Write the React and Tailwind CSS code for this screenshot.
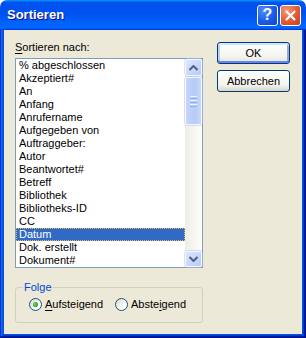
const items = [
  "% abgeschlossen",
  "Akzeptiert#",
  "An",
  "Anfang",
  "Anrufername",
  "Aufgegeben von",
  "Auftraggeber:",
  "Autor",
  "Beantwortet#",
  "Betreff",
  "Bibliothek",
  "Bibliotheks-ID",
  "CC",
  "Datum",
  "Dok. erstellt",
  "Dokument#",
];

function Chevron({ up }) {
  return (
    <svg width="9" height="6" viewBox="0 0 9 6">
      <path
        d={up ? "M0.5 5 L4.5 1 L8.5 5" : "M0.5 1 L4.5 5 L8.5 1"}
        fill="none"
        stroke="#4D6185"
        strokeWidth="2"
      />
    </svg>
  );
}

function ScrollBtn({ up, h }) {
  return (
    <div
      className={`w-[17px] ${h} shrink-0 rounded-[2px] border border-[#F4F7FE] bg-[linear-gradient(135deg,#DCE6FE,#B8CBF8)] shadow-[0_0_0_0.5px_#AFC3EE] flex items-center justify-center`}
    >
      <Chevron up={up} />
    </div>
  );
}

function Radio({ checked }) {
  return (
    <div className="w-[13px] h-[13px] shrink-0 rounded-full border border-[#1C5180] bg-[linear-gradient(135deg,#DCD8CC,#FFFFFF_75%)] flex items-center justify-center">
      {checked && (
        <div className="w-[5px] h-[5px] rounded-full bg-[radial-gradient(circle_at_40%_40%,#6BD96B,#21A121_70%)]" />
      )}
    </div>
  );
}

export default function App() {
  return (
    <div
      className="w-[306px] h-[338px] flex flex-col rounded-t-[7px] overflow-hidden text-[11px] leading-[13px] text-black"
      style={{ fontFamily: '"Liberation Sans", Arial, sans-serif' }}
    >
      {/* title bar */}
      <div className="h-[30px] shrink-0 flex items-center pl-[7px] pr-[5px] bg-[linear-gradient(180deg,#0997FF,#0053EE_8%,#0050EE_40%,#0066FF_88%,#0066FF_93%,#005BFF_95%,#003DD7_96%,#003DD7)]">
        <span className="flex-1 text-white font-bold text-[13px] leading-[16px] [text-shadow:1px_1px_#0F1089]">
          Sortieren
        </span>
        <div className="flex gap-[2px]">
          <div className="w-[21px] h-[21px] rounded-[3px] border border-white bg-[radial-gradient(circle_at_30%_25%,#4C8DF9,#1B5BEB_55%,#0C44D4)] flex items-center justify-center text-white font-bold text-[16px] leading-none">
            ?
          </div>
          <div className="w-[21px] h-[21px] rounded-[3px] border border-white bg-[radial-gradient(circle_at_30%_25%,#F2997A,#E15A33_55%,#C2401C)] flex items-center justify-center">
            <svg width="11" height="11" viewBox="0 0 11 11">
              <path d="M1 1 L10 10 M10 1 L1 10" stroke="white" strokeWidth="2.2" />
            </svg>
          </div>
        </div>
      </div>

      {/* frame + body */}
      <div className="flex-1 flex p-[4px] pt-0 bg-[#0855DD] shadow-[inset_-1px_-1px_#00138C,inset_1px_0_#0831D9,inset_-2px_-2px_#001EA0,inset_2px_0_#166AEE,inset_-3px_-3px_#003BDA,inset_3px_0_#0855DD]">
        <div className="flex-1 bg-[#ECE9D8] flex pl-[11px] pt-[11px]">
          {/* left column */}
          <div className="w-[188px] flex flex-col">
            <div className="h-[13px] mb-[4px]">
              <span className="underline underline-offset-[2px]">S</span>ortieren nach:
            </div>
            <div className="h-[210px] border border-[#7F9DB9] bg-white flex">
              <div className="flex-1 flex flex-col">
                {items.map((it) => (
                  <div
                    key={it}
                    className={
                      it === "Datum"
                        ? "h-[13px] pl-[3px] bg-[#316AC5] text-white outline outline-1 outline-dotted outline-[#E8B84A] -outline-offset-1 whitespace-nowrap"
                        : "h-[13px] pl-[3px] whitespace-nowrap"
                    }
                  >
                    {it}
                  </div>
                ))}
              </div>
              <div className="w-[17px] flex flex-col bg-[linear-gradient(90deg,#EEEDE5,#FDFDFA)]">
                <ScrollBtn up h="h-[17px]" />
                <div className="mt-[1px] w-[17px] h-[48px] rounded-[2px] border border-[#F4F7FE] bg-[linear-gradient(90deg,#C6D6FC,#B7CAF7_60%,#C9D7FB)] shadow-[0_0_0_0.5px_#AFC3EE] flex flex-col items-center justify-center gap-[1px]">
                  <div className="w-[7px] h-[1px] bg-[#EEF4FE]" />
                  <div className="w-[7px] h-[1px] bg-[#8CB0F8]" />
                  <div className="w-[7px] h-[1px] bg-[#EEF4FE]" />
                  <div className="w-[7px] h-[1px] bg-[#8CB0F8]" />
                  <div className="w-[7px] h-[1px] bg-[#EEF4FE]" />
                  <div className="w-[7px] h-[1px] bg-[#8CB0F8]" />
                </div>
                <div className="flex-1" />
                <ScrollBtn h="h-[16px]" />
              </div>
            </div>

            <fieldset className="mt-[13px] border border-[#D0D0BF] rounded-[3px] pb-[11px]">
              <legend className="ml-[7px] px-[1px] text-[#0046D5] leading-[13px]">Folge</legend>
              <div className="flex items-center pl-[13px] mt-[4px] h-[13px]">
                <div className="w-[86px] flex items-center gap-[3px]">
                  <Radio checked />
                  <span>
                    <span className="underline underline-offset-[2px]">A</span>ufsteigend
                  </span>
                </div>
                <div className="flex items-center gap-[3px]">
                  <Radio />
                  <span>
                    Abste<span className="underline underline-offset-[2px]">i</span>gend
                  </span>
                </div>
              </div>
            </fieldset>
          </div>

          {/* right column */}
          <div className="ml-[14px] pt-[1px] flex flex-col gap-[6px]">
            <div className="w-[73px] h-[22px] rounded-[3px] border border-[#003C74] bg-[linear-gradient(180deg,#FFFFFF,#F3F3EF_70%,#E3E1D8)] shadow-[inset_0_2px_0_#CEE7FF,inset_0_-2px_0_#6982EE,inset_2px_0_0_#B8D1F8,inset_-2px_0_0_#89ADE4] flex items-center justify-center">
              OK
            </div>
            <div className="w-[73px] h-[22px] rounded-[3px] border border-[#003C74] bg-[linear-gradient(180deg,#FFFFFF,#F3F3EF_70%,#D8D4C8)] flex items-center justify-center">
              Abbrechen
            </div>
          </div>
        </div>
      </div>
    </div>
  );
}
